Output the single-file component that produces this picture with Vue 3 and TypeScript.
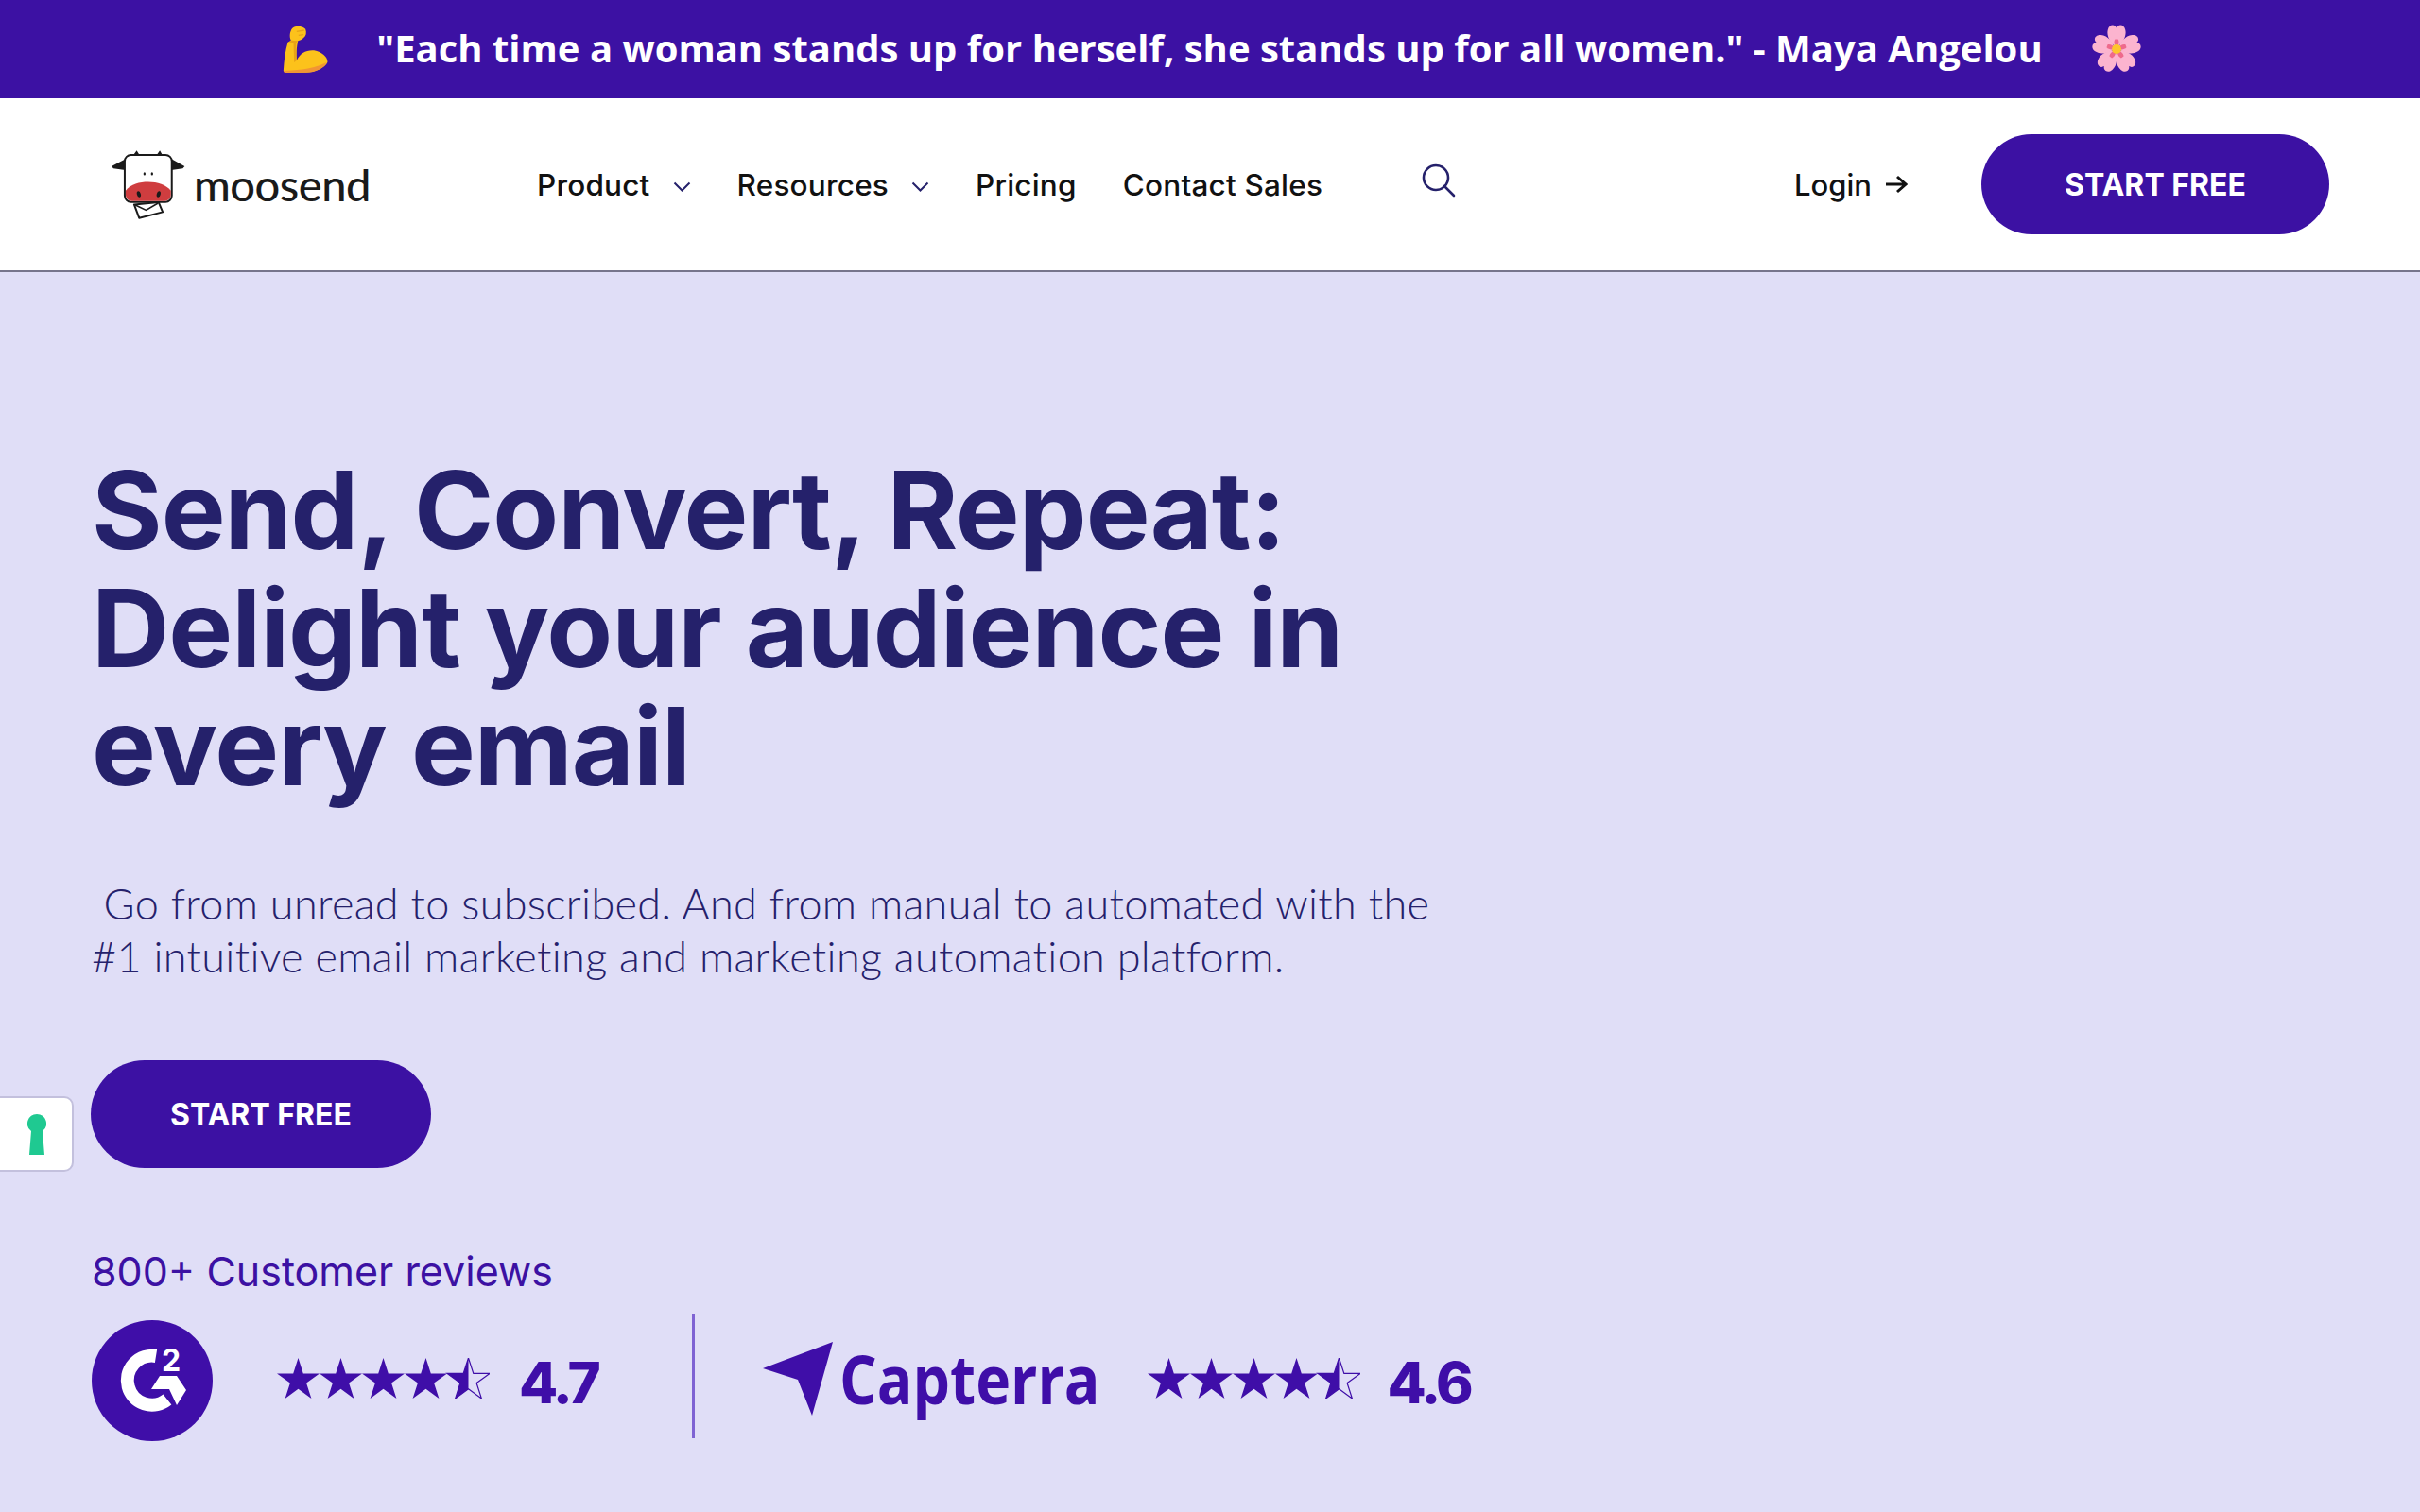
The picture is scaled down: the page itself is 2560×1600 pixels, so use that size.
<script setup lang="ts">
const navItems = [
  { label: 'Product', caret: true },
  { label: 'Resources', caret: true },
  { label: 'Pricing', caret: false },
  { label: 'Contact Sales', caret: false },
]

const starPoints = '22.5,0 27.8,16.4 45,16.4 31.1,26.5 36.4,43 22.5,32.8 8.6,43 13.9,26.5 0,16.4 17.2,16.4'
const stars = [0, 45, 90, 135, 180]
const petals = [0, 72, 144, 216, 288]
</script>

<template>
  <div class="page">
    <div class="promo">
      <svg class="muscle" viewBox="110 75 155 165" width="52" height="55">
        <path fill="#fcc21b" d="M118 225 C120 190 124 160 132 134 L142 128 C136 118 138 100 146 90 C156 80 178 82 188 92 C192 104 190 114 182 120 C176 126 170 128 164 130 C160 150 158 170 160 192 C170 170 190 158 215 160 C240 165 258 180 258 197 C250 215 220 230 190 230 L122 231 Z" />
        <path fill="#f19534" d="M118 225 C150 222 200 225 255 198 C245 218 220 230 190 230 L122 231 Z" />
        <path fill="#e8a317" d="M158 135 L160 192 L152 198 L150 135 Z M142 128 L164 130 L160 136 L136 134 Z" />
        <path fill="none" stroke="#e8a317" stroke-width="4" d="M160 100 L184 96 M166 112 L182 110" />
      </svg>
      <span class="quote">"Each time a woman stands up for herself, she stands up for all women." - Maya Angelou</span>
      <svg class="blossom" viewBox="-82 -82 164 164" width="54" height="54">
        <g v-for="a in petals" :key="a" :transform="`rotate(${a})`">
          <path fill="#fcb4cf" d="M0 -6 C-16 -16 -34 -40 -28 -62 C-24 -80 -6 -82 0 -68 C6 -82 24 -80 28 -62 C34 -40 16 -16 0 -6 Z" />
          <path fill="#ee6a8c" d="M0 -4 C-7 -12 -10 -24 -5 -32 L5 -32 C10 -24 7 -12 0 -4 Z" />
        </g>
        <circle r="15" fill="#fdc62e" />
      </svg>
    </div>

    <header class="topbar">
      <a class="brand">
        <svg viewBox="110 80 250 230" width="83" height="77">
          <path fill="#1a1a1a" d="M162 112 L116 136 L122 143 L160 148 Z M306 112 L349 136 L343 143 L306 148 Z" />
          <path fill="#1a1a1a" d="M186 100 L196 86 L205 100 Z M260 100 L270 86 L278 100 Z" />
          <rect x="158" y="100" width="150" height="150" rx="20" fill="#fff" stroke="#1a1a1a" stroke-width="6" />
          <path fill="#cf3d3f" d="M161 226 L161 214 C178 192 205 186 233 186 C262 186 290 195 305 214 L305 226 C305 238 296 247 285 247 L181 247 C170 247 161 238 161 226 Z" />
          <ellipse cx="221" cy="160" rx="3.5" ry="5" fill="#1a1a1a" />
          <ellipse cx="245" cy="160" rx="3.5" ry="5" fill="#1a1a1a" />
          <ellipse cx="203" cy="225" rx="6" ry="10" fill="#1a1a1a" transform="rotate(-15 203 225)" />
          <ellipse cx="266" cy="225" rx="6" ry="10" fill="#1a1a1a" transform="rotate(15 266 225)" />
          <path fill="#fff" stroke="#1a1a1a" stroke-width="6" stroke-linejoin="round" d="M188 258 L266 251 L279 282 L204 301 Z" />
          <path fill="none" stroke="#1a1a1a" stroke-width="5" d="M192 260 L226 276 L264 254" />
        </svg>
        <span class="wordmark">moosend</span>
      </a>

      <nav class="menu">
        <a v-for="item in navItems" :key="item.label" class="menu-link">
          {{ item.label }}
          <svg v-if="item.caret" class="caret" viewBox="0 0 19 11" width="19" height="11">
            <path d="M1.5 1.5 L9.5 9.5 L17.5 1.5" fill="none" stroke="#25216b" stroke-width="2" />
          </svg>
        </a>
      </nav>

      <svg class="search" viewBox="0 0 36 36" width="36" height="36">
        <circle cx="15" cy="15" r="13" fill="none" stroke="#25216b" stroke-width="2.6" />
        <path d="M24 24 L34 34" stroke="#25216b" stroke-width="2.6" stroke-linecap="round" />
      </svg>

      <a class="login">
        Login
        <svg viewBox="0 0 23 20" width="23" height="20">
          <path d="M0 10 H20 M12 2 L21 10 L12 18" fill="none" stroke="#111" stroke-width="3" />
        </svg>
      </a>
      <a class="cta cta-nav">START FREE</a>
    </header>

    <main class="hero">
      <h1 class="headline">Send, Convert, Repeat:<br />Delight your audience in<br />every email</h1>
      <p class="lead">&nbsp;Go from unread to subscribed. And from manual to automated with the<br />#1 intuitive email marketing and marketing automation platform.</p>
      <a class="cta cta-hero">START FREE</a>
      <div class="reviews-title">800+ Customer reviews</div>

      <div class="reviews">
        <svg class="g2" viewBox="0 0 128 128" width="128" height="128">
          <circle cx="64" cy="64" r="64" fill="#3f0ea8" />
          <path d="M68 38 A26 26 0 1 0 80 84" fill="none" stroke="#fff" stroke-width="14" />
          <polygon fill="#fff" points="63,73 72,59 90,59 100,74 90,90 82,73" />
          <text x="74" y="54" class="g2-two">2</text>
        </svg>
        <svg class="stars" viewBox="0 0 225 43" width="225" height="43">
          <defs>
            <clipPath id="half"><rect x="0" y="0" width="22.5" height="43" /></clipPath>
          </defs>
          <g v-for="x in stars" :key="x" :transform="`translate(${x} 0)`">
            <polygon v-if="x < 180" :points="starPoints" fill="#3f0ea8" />
            <template v-else>
              <polygon :points="starPoints" fill="none" stroke="#3f0ea8" stroke-width="1.2" />
              <polygon :points="starPoints" fill="#3f0ea8" clip-path="url(#half)" />
            </template>
          </g>
        </svg>
        <span class="score score-g2">4.7</span>
        <span class="divider"></span>
        <svg class="capterra-mark" viewBox="0 0 75 78" width="75" height="78">
          <polygon fill="#3f0ea8" points="0,28 74,0 52,78 37,40" />
        </svg>
        <span class="capterra-name">Capterra</span>
        <svg class="stars stars-cap" viewBox="0 0 225 43" width="225" height="43">
          <g v-for="x in stars" :key="x" :transform="`translate(${x} 0)`">
            <polygon v-if="x < 180" :points="starPoints" fill="#3f0ea8" />
            <template v-else>
              <polygon :points="starPoints" fill="none" stroke="#3f0ea8" stroke-width="1.2" />
              <polygon :points="starPoints" fill="#3f0ea8" clip-path="url(#half)" />
            </template>
          </g>
        </svg>
        <span class="score score-cap">4.6</span>
      </div>
    </main>

    <div class="keeper">
      <svg viewBox="0 0 20 43" width="20" height="43">
        <path fill="#1fc991" d="M10 0 A10 10 0 0 1 16 18 L18 43 H2 L4 18 A10 10 0 0 1 10 0 Z" />
      </svg>
    </div>
  </div>
</template>

<style scoped>
.page {
  position: relative;
  width: 2560px;
  height: 1600px;
  overflow: hidden;
  background: #e0def7;
  font-family: Inter, "Liberation Sans", sans-serif;
}

.promo {
  display: flex;
  align-items: center;
  justify-content: center;
  height: 104px;
  padding-left: 3px;
  background: #3c11a3;
}

.muscle {
  margin-right: 49px;
}

.quote {
  font-family: "Open Sans", "Noto Sans", sans-serif;
  font-size: 40px;
  font-weight: 700;
  color: #fff;
  white-space: nowrap;
  margin-top: -3px;
}

.blossom {
  margin-left: 51px;
}

.topbar {
  display: flex;
  align-items: center;
  height: 182px;
  padding: 0 96px 0 116px;
  background: #fff;
  border-bottom: 2px solid #77758c;
}

.brand {
  display: flex;
  align-items: center;
  gap: 6px;
  width: 452px;
}

.wordmark {
  font-family: Lato, sans-serif;
  font-size: 47px;
  font-weight: 500;
  color: #1a1a1a;
  letter-spacing: -0.5px;
}

.menu {
  display: flex;
  align-items: center;
  gap: 49px;
}

.menu-link {
  display: flex;
  align-items: center;
  gap: 24px;
  font-size: 31.5px;
  font-weight: 500;
  letter-spacing: 0.2px;
  color: #111;
  white-space: nowrap;
}

.caret {
  margin-top: 4px;
}

.search {
  margin-left: 105px;
  margin-top: -8px;
}

.login {
  display: flex;
  align-items: center;
  gap: 15px;
  margin-left: auto;
  margin-right: 78px;
  font-size: 31px;
  font-weight: 500;
  color: #111;
}

.cta {
  display: flex;
  align-items: center;
  justify-content: center;
  background: #3c11a3;
  color: #fff;
  font-size: 32px;
  font-weight: 700;
  border-radius: 58px;
}

.cta-nav {
  width: 368px;
  height: 106px;
}

.cta-hero {
  width: 360px;
  height: 114px;
  margin: 82px 0 0 -1px;
}

.hero {
  padding: 189px 0 0 97px;
}

.headline {
  margin: 0;
  font-size: 114px;
  line-height: 125px;
  font-weight: 700;
  color: #25216b;
  letter-spacing: -1px;
}

.lead {
  margin: 76px 0 0;
  font-family: Lato, sans-serif;
  font-size: 45px;
  line-height: 56px;
  font-weight: 300;
  letter-spacing: 0.33px;
  font-variant-ligatures: none;
  color: #25216b;
}

.reviews-title {
  margin-top: 81px;
  font-size: 43px;
  line-height: 56px;
  color: #3c11a3;
}

.reviews {
  display: flex;
  align-items: center;
  margin-top: 22px;
  height: 132px;
}

.g2-two {
  font-family: Inter, sans-serif;
  font-size: 32px;
  font-weight: 700;
  fill: #fff;
}

.stars {
  margin-left: 68px;
  margin-bottom: 5px;
}

.stars-cap {
  margin-left: 58px;
}

.score {
  font-size: 60px;
  font-weight: 800;
  letter-spacing: -3.5px;
  color: #3f0ea8;
  line-height: 1;
  margin-top: 3px;
}

.score-g2 {
  margin-left: 31px;
}

.score-cap {
  margin-left: 28px;
}

.divider {
  width: 3px;
  height: 132px;
  margin-left: 100px;
  margin-bottom: 10px;
  background: #7f63d3;
}

.capterra-mark {
  margin-left: 72px;
  margin-top: -4px;
}

.capterra-name {
  width: 268px;
  margin-left: 6px;
  margin-bottom: 5px;
  font-family: "Open Sans", sans-serif;
  font-size: 71px;
  font-weight: 700;
  color: #3f0ea8;
  line-height: 1;
  transform: scaleX(0.88);
  transform-origin: left center;
  white-space: nowrap;
}

/* cookie widget pinned over the page edge */
.keeper {
  position: absolute;
  left: -2px;
  top: 1160px;
  display: flex;
  align-items: center;
  justify-content: center;
  box-sizing: border-box;
  width: 80px;
  height: 80px;
  padding-left: 2px;
  background: #fff;
  border: 2px solid #c3c0dd;
  border-radius: 0 10px 10px 0;
}
</style>
